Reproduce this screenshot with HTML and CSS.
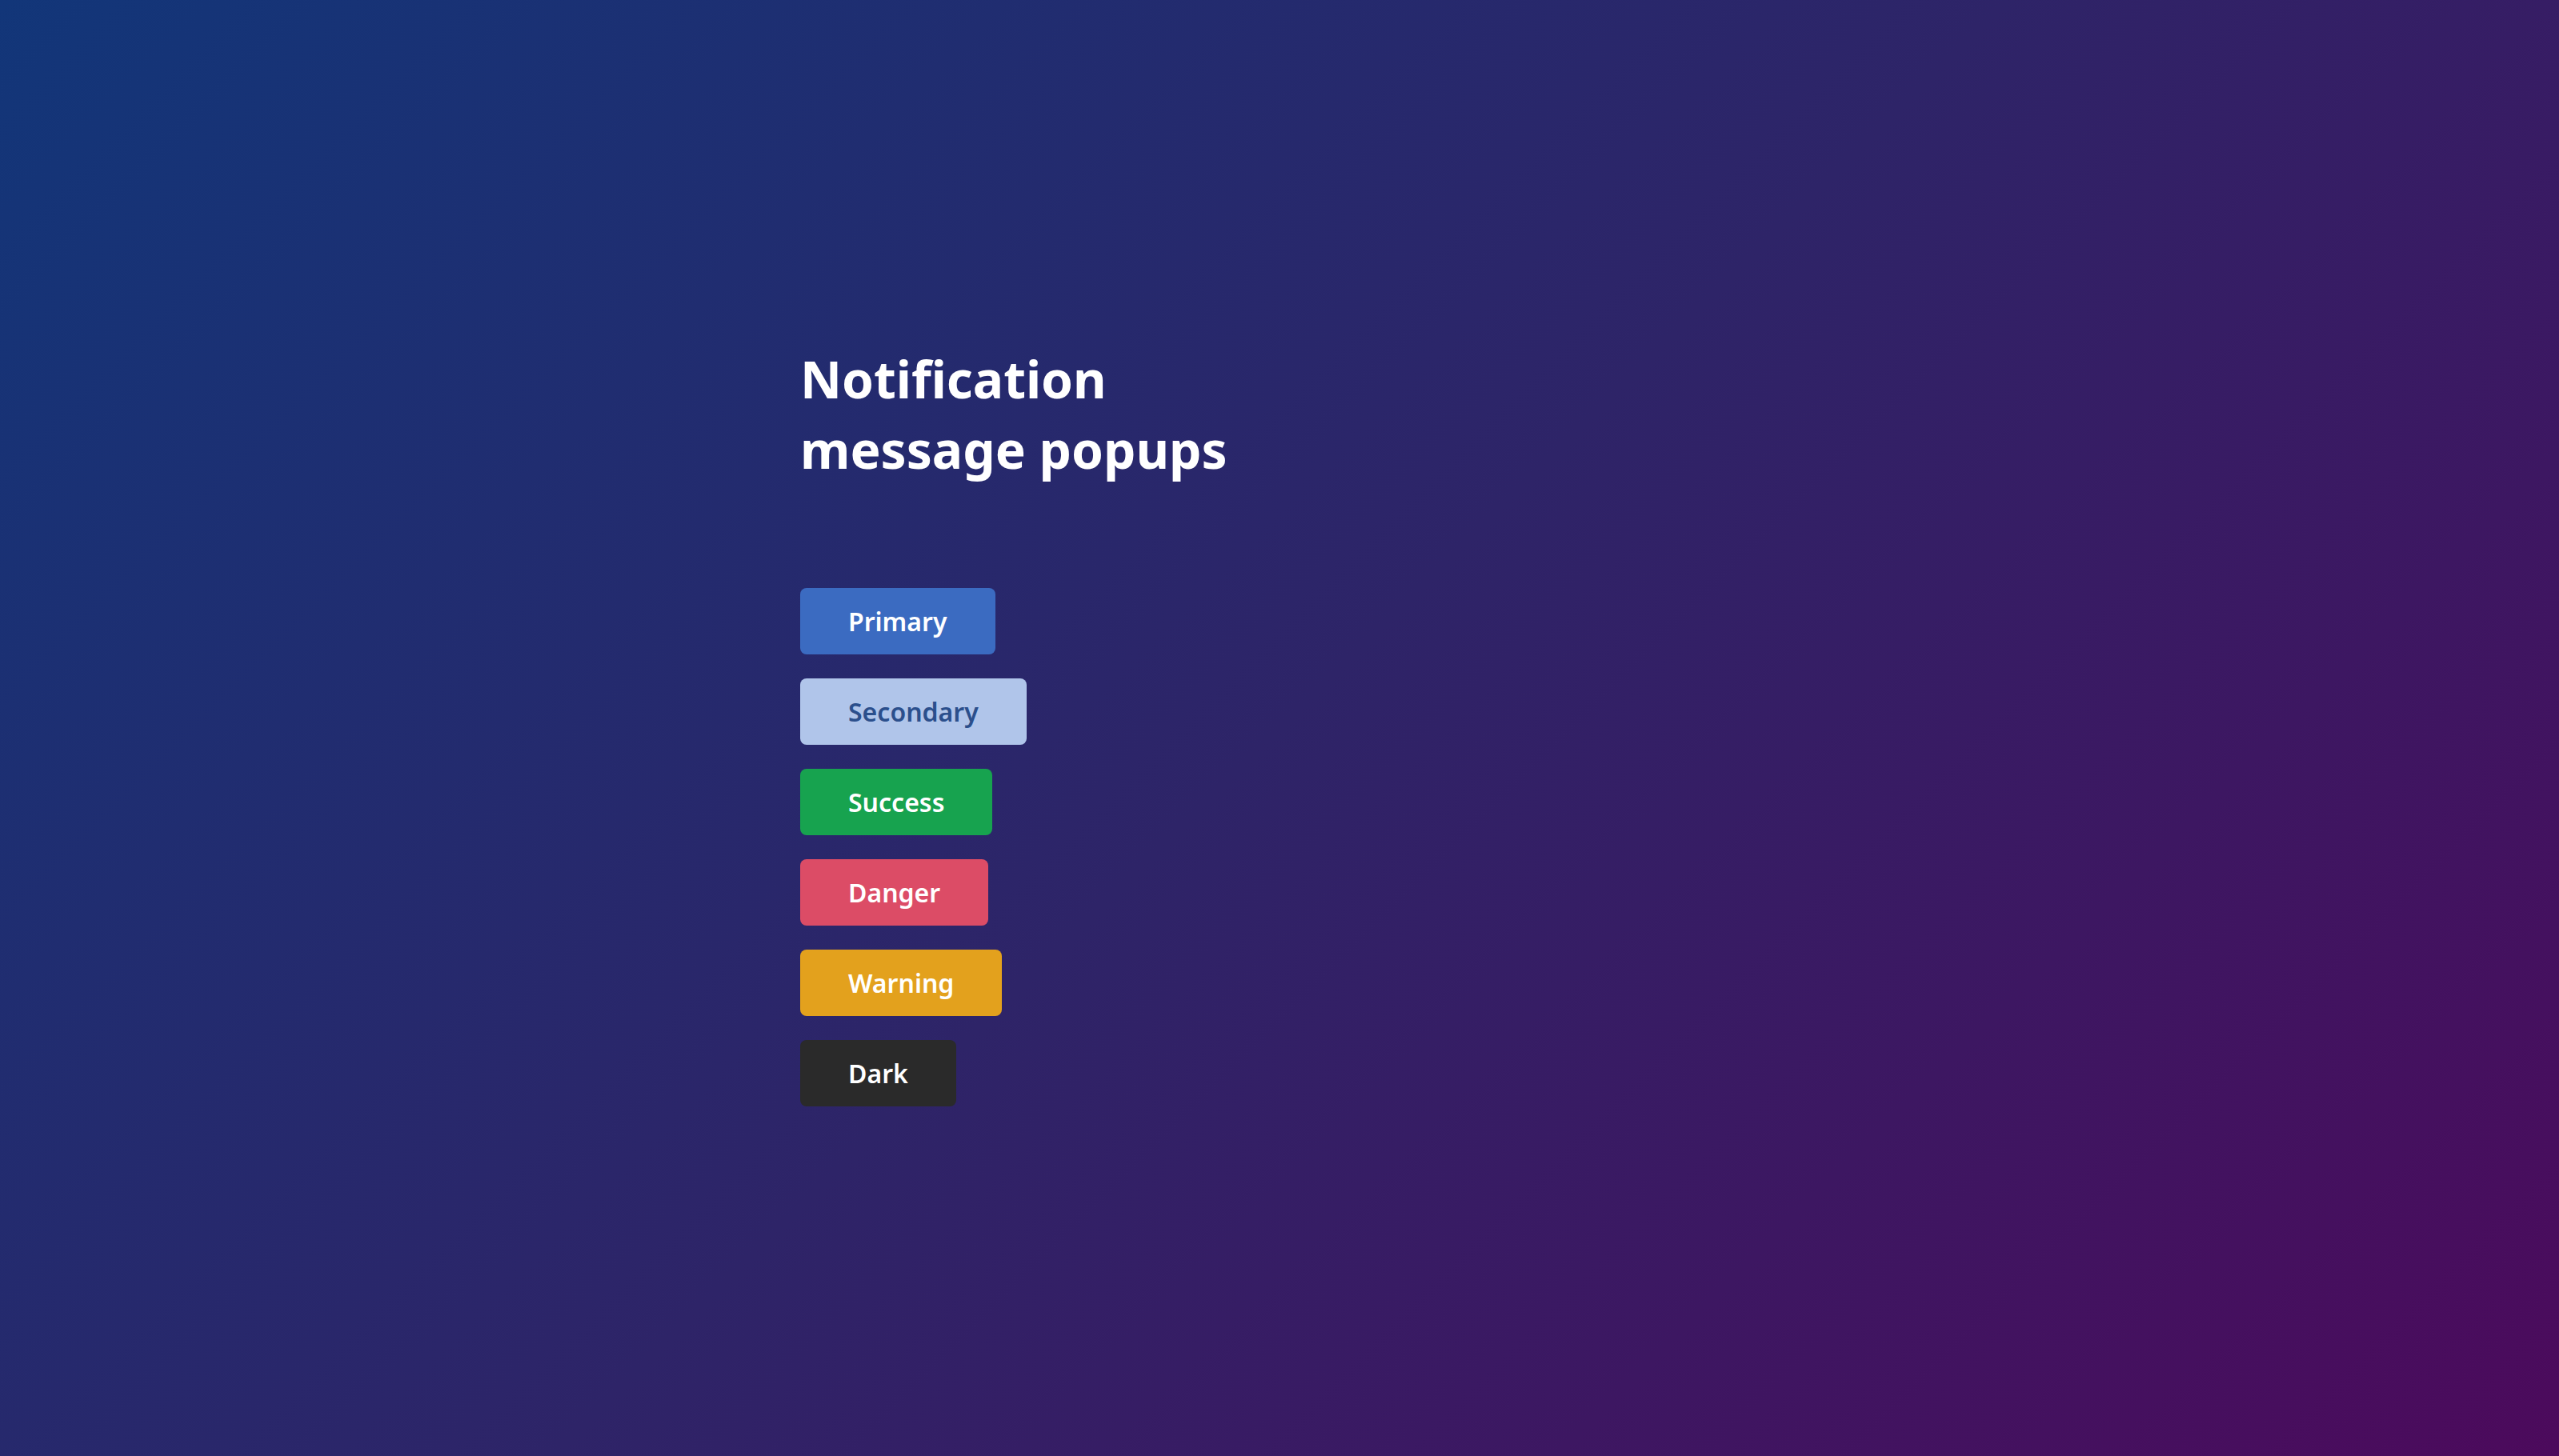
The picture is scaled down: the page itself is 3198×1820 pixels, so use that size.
FILE: index.html
```html
<!DOCTYPE html>
<html lang="en">
<head>
<meta charset="utf-8">
<title>Notification message popups</title>
<link rel="stylesheet" href="styles.css">
</head>
<body>
<main class="page">
  <h1 class="title">Notification<br>message popups</h1>
  <div class="buttons">
    <button class="btn btn-primary">Primary</button>
    <button class="btn btn-secondary">Secondary</button>
    <button class="btn btn-success">Success</button>
    <button class="btn btn-danger">Danger</button>
    <button class="btn btn-warning">Warning</button>
    <button class="btn btn-dark">Dark</button>
  </div>
</main>
</body>
</html>
```
FILE: styles.css
```css
html, body {
  margin: 0;
  padding: 0;
  height: 100%;
  overflow: hidden;
}
body {
  background: linear-gradient(135deg, #123679 0%, #2e2468 50%, #4c0a5c 100%);
  font-family: "Noto Sans", "Open Sans", sans-serif;
  color: #fff;
}
.page {
  display: flex;
  flex-direction: column;
  align-items: flex-start;
  padding: 430px 0 0 1000px;
  box-sizing: border-box;
  min-height: 100vh;
}
.title {
  margin: 0;
  font-size: 64px;
  line-height: 88px;
  font-weight: 700;
  color: #fff;
}
.buttons {
  display: flex;
  flex-direction: column;
  align-items: flex-start;
  gap: 30px;
  margin-top: 129px;
}
.btn {
  font-family: inherit;
  font-size: 32px;
  font-weight: 600;
  height: 83px;
  padding: 0 60px;
  border: none;
  border-radius: 8px;
  color: #fff;
  cursor: pointer;
  display: flex;
  align-items: center;
}
.btn-primary { background: #3b6bc1; }
.btn-secondary { background: #b0c5ea; color: #2b4f8c; }
.btn-success { background: #17a34f; }
.btn-danger { background: #dc4c66; }
.btn-warning { background: #e3a11d; }
.btn-dark { background: #2a2a2a; }
```
